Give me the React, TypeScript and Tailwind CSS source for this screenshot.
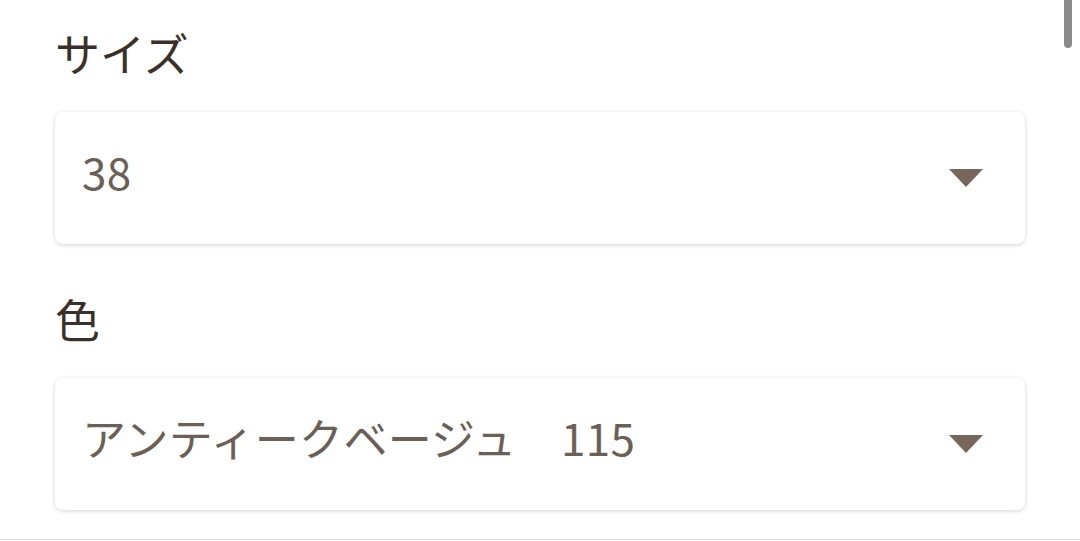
import React from "react";

const font = { fontFamily: '"Noto Sans CJK JP", "Noto Sans", sans-serif' };

function Caret() {
  return (
    <svg width="34" height="18" viewBox="0 0 34 18" className="shrink-0">
      <path d="M0 0 H34 L17 18 Z" fill="#76675a" />
    </svg>
  );
}

function SelectBox({ value }: { value: string }) {
  return (
    <div className="flex h-[132px] items-center justify-between rounded-[8px] bg-white pl-[27px] pr-[42px] shadow-[0_1px_4px_rgba(0,0,0,0.18)]">
      <span className="mb-[14px] whitespace-pre text-[44px] leading-none tracking-[0.3px] text-[#6b5f56]">{value}</span>
      <Caret />
    </div>
  );
}

function Field({ label, value }: { label: string; value: string }) {
  return (
    <div>
      <div className="flex h-[56px] items-center text-[45px] leading-none text-[#3b3029]">{label}</div>
      <div className="mt-[32px]">
        <SelectBox value={value} />
      </div>
    </div>
  );
}

export default function App() {
  return (
    <div className="relative h-[541px] w-[1080px] overflow-hidden bg-white" style={font}>
      <div className="px-[55px] pt-[24px]">
        <Field label="サイズ" value="38" />
        <div className="mt-[46px]">
          <Field label="色" value={"アンティークベージュ\u3000115"} />
        </div>
      </div>
      <div className="mt-[29px] border-t border-[#e4e4e4]" />
      <div className="absolute right-[8px] top-0 h-[48px] w-[8px] rounded-b-full bg-[#8a8a8a]" />
    </div>
  );
}
